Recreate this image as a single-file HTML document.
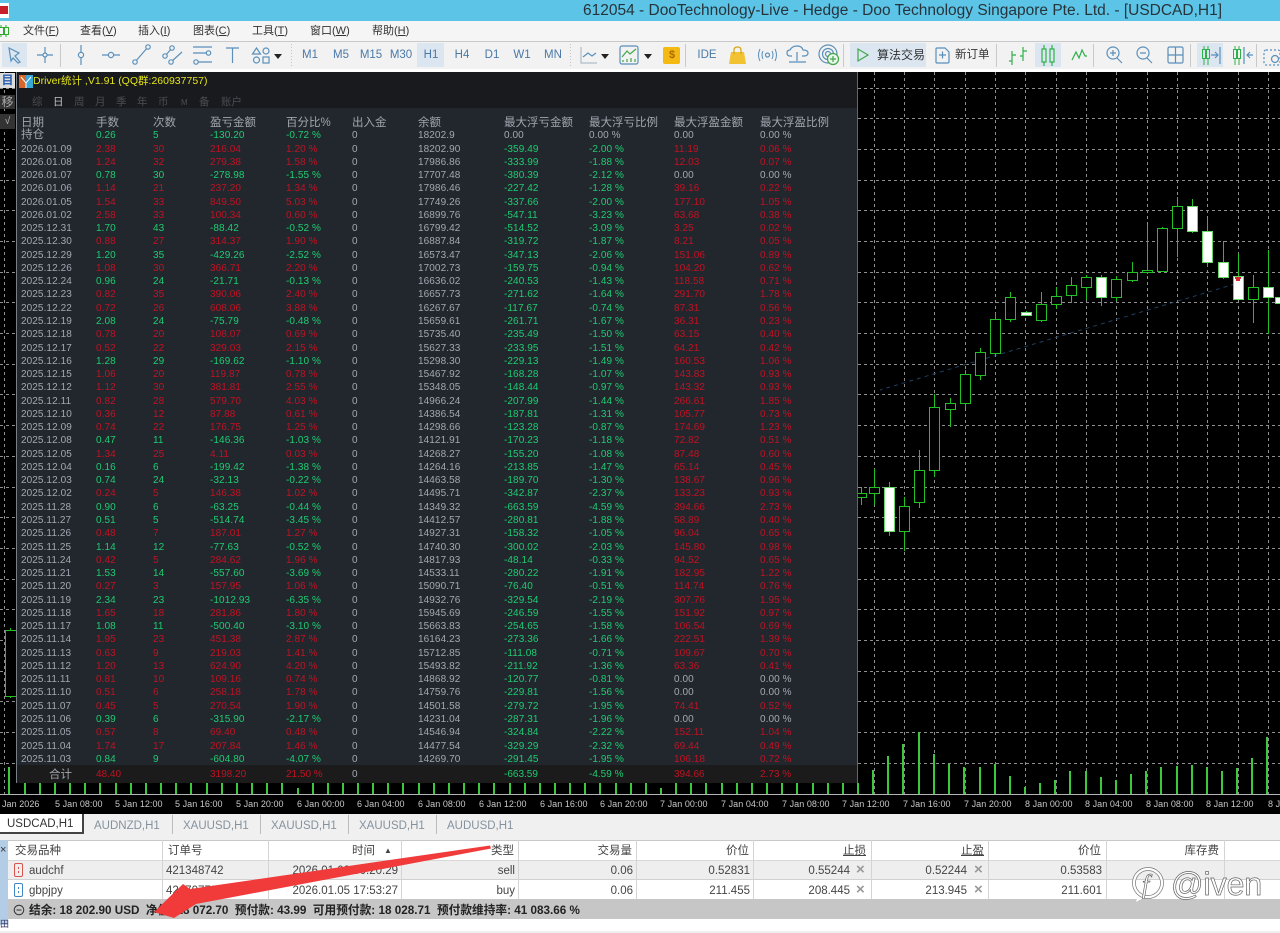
<!DOCTYPE html>
<html><head><meta charset="utf-8"><title>MT5</title>
<style>
html,body{margin:0;padding:0;width:1280px;height:933px;overflow:hidden;background:#fff}
body{position:relative;font-family:"Liberation Sans","Noto Sans CJK SC",sans-serif;color:#222}
.a{position:absolute;white-space:nowrap}
u{text-underline-offset:1px}
#title{left:0;top:0;width:1280px;height:21px;background:#5cc5e7}
#menu{left:0;top:21px;width:1280px;height:20px;background:#f5f5f5;font-size:11px;line-height:20px;color:#333}
#tool{left:0;top:41px;width:1280px;height:28px;background:#f2f2f2;border-top:1px solid #c9c9c9;box-sizing:border-box}
.tf{font-size:11.5px;line-height:14px;color:#4a79a8;top:48px;transform:translateX(-50%)}
#chart{left:0;top:72px;width:1280px;height:742px;background:#000}
.tl{font-size:9px;color:#c8c8c8;top:799px;line-height:11px;letter-spacing:.05px}
#panel{left:16px;top:72px;width:842px;height:711px;background:#22272e;border-left:1px solid #7a8088;border-right:1px solid #666;box-sizing:border-box;overflow:hidden;filter:blur(.2px)}
#ptop{position:absolute;left:0;top:0;width:100%;height:36px;background:#191a1d}
#ptotal{position:absolute;left:0;top:693px;width:100%;height:18px;background:#1b1b1c}
.tb{font-size:10.5px;top:24px;line-height:13px;color:#4a4d52}
.h{font-size:11.5px;color:#a0a6ae;top:43.500px;line-height:15px}
#rows{position:absolute;left:-17px;top:57.300px;width:860px;font-size:10px;letter-spacing:.08px}
#rows p{margin:0;height:13.28px;line-height:13.28px;position:relative;color:#a2a8b1}
#rows i{font-style:normal;position:absolute;top:0;white-space:nowrap}
#rows i:nth-child(1){left:21px}
#rows i:nth-child(2){left:96px;color:#c01222}
#rows i:nth-child(3){left:153px;color:#c01222}
#rows i:nth-child(4){left:210px;color:#c01222}
#rows i:nth-child(5){left:286px;color:#c01222}
#rows i:nth-child(6){left:352px}
#rows i:nth-child(7){left:418px}
#rows i:nth-child(8){left:504px;color:#1ecb70}
#rows i:nth-child(9){left:589px;color:#1ecb70}
#rows i:nth-child(10){left:674px;color:#c01222}
#rows i:nth-child(11){left:760px;color:#c01222}
#rows p.u i:nth-child(2),#rows p.u i:nth-child(3),#rows p.u i:nth-child(4),#rows p.u i:nth-child(5){color:#1ecb70}
#rows p.z i:nth-child(10),#rows p.z i:nth-child(11){color:#a2a8b1}
#rows p.n i:nth-child(8),#rows p.n i:nth-child(9){color:#a2a8b1}
.tt{top:767px;font-size:10px;line-height:16px;color:#c01222;filter:blur(.2px)}
#tabs{left:0;top:814px;width:1280px;height:26px;background:#f0f0f0;font-size:11.5px;color:#85929e}
.tab{top:5px;line-height:14px;font-size:11.5px}
.sep{width:1px;height:19px;background:#bbb;top:1px}
#tab0{left:0;top:0;width:84px;height:20px;background:#fff;border-right:2px solid #444;border-bottom:2px solid #444;box-sizing:border-box;color:#333;line-height:20px;text-indent:7px;font-size:11.5px}
#tbl{left:0;top:840px;width:1280px;height:93px;background:#fff}
.rw{left:8px;width:1272px;height:19.5px;box-sizing:border-box}
.c{font-size:11.5px;line-height:15px;color:#444}
.r{transform:translateX(-100%)}
.v{width:1px;background:#d4d4d4;top:0;height:59px}
</style></head><body>
<div class="a" id="title"></div>
<div class="a" style="left:0;top:3px;width:9px;height:15px;background:#fff"></div>
<div class="a" style="left:0;top:6px;width:8px;height:8px;background:#c8202a"></div>
<div class="a" style="left:583px;top:1px;font-size:15.5px;line-height:19px;color:#27333a">612054 - DooTechnology-Live - Hedge - Doo Technology Singapore Pte. Ltd. - [USDCAD,H1]</div>

<div class="a" id="menu">
<span class="a" style="left:23px">文件(<u>F</u>)</span>
<span class="a" style="left:80px">查看(<u>V</u>)</span>
<span class="a" style="left:138px">插入(<u>I</u>)</span>
<span class="a" style="left:193px">图表(<u>C</u>)</span>
<span class="a" style="left:252px">工具(<u>T</u>)</span>
<span class="a" style="left:310px">窗口(<u>W</u>)</span>
<span class="a" style="left:372px">帮助(<u>H</u>)</span>
<svg class="a" style="left:0;top:3px" width="12" height="14"><path d="M1 1V13M6 1V13" stroke="#2eaa2e" fill="none"/><rect x="-1.5" y="3.5" width="5" height="7" fill="#f5f5f5" stroke="#2eaa2e"/><rect x="4.5" y="3.5" width="4" height="7" fill="#f5f5f5" stroke="#2eaa2e"/></svg>
</div>

<div class="a" id="tool"></div>
<svg class="a" style="left:0;top:41px" width="1280" height="28" fill="none" stroke="#5a90bb" stroke-width="1.2">
<g stroke="none"><rect x="2" y="2" width="25" height="24" fill="#dbe6f1"/><rect x="417" y="2" width="27" height="24" fill="#dbe6f1"/><rect x="850" y="2" width="76" height="24" fill="#dbe6f1"/><rect x="1035" y="2" width="26" height="24" fill="#dbe6f1"/><rect x="1197" y="2" width="26" height="24" fill="#dbe6f1"/></g>
<g stroke="#c9c9c9" stroke-width="1"><path d="M60.5 3V26M685.5 3V26M843.5 3V26M996.5 3V26M1093.5 3V26M1190.5 3V26M1256.5 3V26"/></g>
<g stroke="#c4c4c4" stroke-width="1" stroke-dasharray="1 2"><path d="M291.5 3V26M570.5 3V26"/></g>
<path d="M9 7L19 12L15 15L20 21L18 22L13 17L11 20Z"/>
<path d="M37 14H53M45 6V22"/><circle cx="45" cy="14" r="2" fill="#f2f2f2"/>
<path d="M81 4V24"/><circle cx="81" cy="14" r="2.6" fill="#f2f2f2"/>
<path d="M102 14H120"/><circle cx="111" cy="14" r="2.6" fill="#f2f2f2"/>
<path d="M135 21L148 6"/><circle cx="135" cy="21" r="2.2" fill="#f2f2f2"/><circle cx="148" cy="6" r="2.2" fill="#f2f2f2"/>
<path d="M165 15L172 7M171 21L182 11"/><circle cx="165" cy="15" r="2.2" fill="#f2f2f2"/><circle cx="172" cy="7" r="2.2" fill="#f2f2f2"/><circle cx="171" cy="21" r="2.2" fill="#f2f2f2"/>
<path d="M193 6H212M193 12H206M198 21H212"/><circle cx="208.500" cy="12" r="2.200" fill="#f2f2f2"/><circle cx="196" cy="21" r="2.200" fill="#f2f2f2"/>
<path d="M226 7H239M232.5 7V22"/>
<path d="M252.500 13L256.500 7L260.500 13Z"/><circle cx="266" cy="10" r="3"/><circle cx="256.500" cy="19" r="3"/><rect x="263" y="16" width="6" height="6"/>
<path d="M274 13H282L278 18Z" fill="#222" stroke="none"/>
<path d="M581 6V22H597" stroke="#b0bcc8"/><path d="M583 16L588 12L592 15L596 12"/>
<path d="M601 13H609L605 18Z" fill="#222" stroke="none"/>
<rect x="620" y="5" width="18" height="18" rx="2"/><path d="M622 16L627 10L630 13L636 8" stroke="#3fa64a"/><path d="M623 21V19M627 21V18M631 21V17M635 21V18" stroke="#3fa64a"/>
<path d="M644 13H652L648 18Z" fill="#222" stroke="none"/>
<rect x="663" y="6" width="17" height="17" rx="2" fill="#f5b914" stroke="none"/>
<path d="M731 11H744L746 23H729Z" fill="#f1c232" stroke="none"/><path d="M734 13V9Q734 6 737.500 6T741 9V13" stroke="#d6a40f"/>
<circle cx="767.500" cy="14" r="2"/><path d="M763 10Q761 14 763 18M772 10Q774 14 772 18M760 8Q757 14 760 20M775 8Q778 14 775 20" stroke-width="1"/>
<path d="M792 15H790Q787 15 787 12T790 9Q792 5 797 5T803 9Q808 9 808 12T804 15H802" /><path d="M797 11V20M789 21H806"/>
<circle cx="828" cy="13" r="9"/><circle cx="828" cy="13" r="5.500"/><circle cx="828" cy="13" r="2.500"/><circle cx="833" cy="18" r="5.500" fill="#eaf6ea" stroke="#3fa64a"/><path d="M833 15V21M830 18H836" stroke="#3fa64a"/>
<path d="M858 8V20L868 14Z" stroke="#3fa64a"/>
<path d="M937 7H945L949 11V21Q949 22 947 22H937Q936 22 936 21V8Q936 7 937 7Z"/><path d="M939 14H946M942.500 10.500V17.500" stroke="#5a90bb"/>
<g stroke="#2eb04a"><path d="M1012 10V24M1012 14H1016M1012 20H1009M1023 6V20M1023 10H1027M1023 15H1020"/>
<path d="M1044 4V25M1052 4V25"/><rect x="1042" y="8" width="4" height="13" fill="#dbe6f1"/><rect x="1050" y="8" width="4" height="13" fill="#dbe6f1"/>
<path d="M1072 19L1076 11L1079 17L1082 9L1085 15H1087"/></g>
<circle cx="1113" cy="12" r="6"/><path d="M1117 17L1122 22M1110 12H1116M1113 9V15"/>
<circle cx="1143" cy="12" r="6"/><path d="M1147 17L1152 22M1140 12H1146"/>
<rect x="1168" y="6" width="15" height="16" rx="1.500"/><path d="M1175.500 6V22M1168 14H1183"/>
<g stroke="#2eb04a" stroke-width="1"><path d="M1204 5V24M1208 5V24"/><rect x="1202.500" y="8.500" width="3" height="9" fill="#dbe6f1"/><rect x="1206.500" y="8.500" width="3" height="9" fill="#dbe6f1"/></g><path d="M1211 14H1217M1215 11L1218 14L1215 17M1220 6V23" />
<g stroke="#2eb04a" stroke-width="1"><path d="M1235 5V24M1239 5V24"/><rect x="1233.500" y="8.500" width="3" height="9" fill="#f2f2f2"/><rect x="1237.500" y="8.500" width="3" height="9" fill="#f2f2f2"/></g><path d="M1244 6V23M1247 14H1253M1250 11L1247 14L1250 17" />
<rect x="1264" y="9" width="16" height="15" rx="2" stroke-dasharray="2 2"/><circle cx="1275" cy="18" r="3.500"/>
</svg>
<span class="a" style="left:669px;top:48px;font-size:11px;line-height:14px;color:#a86d00;font-weight:bold">$</span>
<span class="a tf" style="left:310px">M1</span><span class="a tf" style="left:341px">M5</span><span class="a tf" style="left:371px">M15</span><span class="a tf" style="left:401px">M30</span><span class="a tf" style="left:431px">H1</span><span class="a tf" style="left:462px">H4</span><span class="a tf" style="left:492px">D1</span><span class="a tf" style="left:522px">W1</span><span class="a tf" style="left:553px">MN</span><span class="a tf" style="left:707px">IDE</span>
<span class="a" style="left:877px;top:48px;font-size:12px;line-height:15px;color:#333">算法交易</span>
<span class="a" style="left:955px;top:48px;font-size:11.5px;line-height:15px;color:#333">新订单</span>
<div class="a" style="left:0;top:69px;width:1280px;height:3px;background:#fff"></div>

<div class="a" id="chart"></div>
<svg class="a" style="left:0;top:0" width="1280" height="814" shape-rendering="crispEdges">
<g fill="none" stroke="#8e8e8e" stroke-dasharray="3 3">
<path d="M0 88.500H1280M0 118.500H1280M0 149.500H1280M0 180.500H1280M0 210.500H1280M0 241.500H1280M0 272.500H1280M0 302.500H1280M0 333.500H1280M0 364.500H1280M0 394.500H1280M0 425.500H1280M0 456.500H1280M0 487.500H1280M0 517.500H1280M0 548.500H1280M0 579.500H1280M0 609.500H1280M0 640.500H1280M0 671.500H1280M0 701.500H1280M0 732.500H1280M0 763.500H1280"/>
<path d="M4.500 72V794M874.500 72V794M904.500 72V794M934.500 72V794M965.500 72V794M995.500 72V794M1025.500 72V794M1056.500 72V794M1086.500 72V794M1116.500 72V794M1147.500 72V794M1177.500 72V794M1207.500 72V794M1238.500 72V794M1268.500 72V794"/>
</g>
<path d="M1235 284L880 390" stroke="#1d3f60" fill="none" stroke-dasharray="4 4" shape-rendering="auto"/>
<g stroke="#22c022" fill="none">
<path d="M861.500 487V505M874.500 469V505M889.500 482V536M904.500 497V551M919.500 450V508M934.500 394V477M950.500 398V427M965.500 370V408M980.500 348V380M995.500 313V356M1010.500 292V322M1026.500 311V316M1041.500 292V322M1056.500 287V309M1071.500 277V303M1086.500 275V300M1101.500 275V306M1116.500 276V301M1132.500 262V282M1147.500 225V274M1162.500 227V272M1177.500 197V257M1192.500 199V233M1207.500 219V267M1223.500 241V279M1238.500 254V300M1253.500 275V323M1268.500 250V334M10.500 628V698"/>
<g fill="#000">
<rect x="856.500" y="493.500" width="10" height="4"/><rect x="869.500" y="487.500" width="10" height="6"/><rect x="899.500" y="506.500" width="10" height="25"/><rect x="914.500" y="470.500" width="10" height="32"/><rect x="929.500" y="407.500" width="10" height="63"/><rect x="945.500" y="403.500" width="10" height="6"/><rect x="960.500" y="374.500" width="10" height="29"/><rect x="975.500" y="352.500" width="10" height="23"/><rect x="990.500" y="319.500" width="10" height="34"/><rect x="1005.500" y="297.500" width="10" height="22"/><rect x="1036.500" y="304.500" width="10" height="16"/><rect x="1051.500" y="296.500" width="10" height="8"/><rect x="1066.500" y="285.500" width="10" height="10"/><rect x="1081.500" y="277.500" width="10" height="10"/><rect x="1111.500" y="279.500" width="10" height="18"/><rect x="1127.500" y="272.500" width="10" height="8"/><rect x="1142.500" y="270.500" width="10" height="2"/><rect x="1157.500" y="228.500" width="10" height="43"/><rect x="1172.500" y="206.500" width="10" height="22"/><rect x="1248.500" y="287.500" width="10" height="12"/><rect x="5.500" y="630.500" width="11" height="66"/>
</g>
<g fill="#fff" stroke="#66d866">
<rect x="884.500" y="487.500" width="10" height="44"/><rect x="1021.500" y="312.500" width="10" height="3"/><rect x="1096.500" y="277.500" width="10" height="20"/><rect x="1187.500" y="206.500" width="10" height="25"/><rect x="1202.500" y="231.500" width="10" height="31"/><rect x="1218.500" y="262.500" width="10" height="15"/><rect x="1233.500" y="276.500" width="10" height="23"/><rect x="1263.500" y="287.500" width="10" height="10"/><rect x="1275.500" y="297.500" width="10" height="6"/>
</g>
</g>
<path d="M1235 277H1241V279H1240V281H1236V279H1235Z" fill="#d9242c"/>
<g stroke="#3dc83d" stroke-width="2" fill="none">
<path d="M873 770V794M888 756V794M903 744V794M919 732V794M934 754V794M949 764V794M964 767V794M980 767V794M995 764V794M1010 776V794M1025 787V794M1040 783V794M1055 780V794M1070 771V794M1086 771V794M1101 777V794M1116 780V794M1131 774V794M1146 771V794M1161 767V794M1177 766V794M1192 765V794M1207 767V794M1222 771V794M1237 768V794M1252 758V794M1267 737V794M9 767V794"/>
<path d="M858 783V794M843 783V794M828 783V794M813 783V794M797 783V794M782 783V794M767 783V794M752 783V794M737 783V794M722 783V794M706 783V794M691 783V794M676 783V794M661 788V794M646 783V794M631 783V794M616 783V794M600 783V794M585 783V794M570 783V794M555 783V794M540 783V794M525 783V794M510 783V794M494 783V794M479 783V794M464 783V794M449 783V794M434 783V794M419 783V794M403 783V794M388 783V794M373 783V794M358 783V794M343 783V794M328 783V794M313 783V794M298 788V794M282 783V794M267 783V794M252 783V794M237 783V794M222 783V794M207 783V794M191 783V794M176 783V794M161 783V794M146 783V794M131 783V794M116 783V794M100 783V794M85 783V794M70 783V794M55 783V794M40 783V794M25 783V794"/>
</g>
<rect x="0" y="794" width="1280" height="1" fill="#b4b4b4"/>
</svg>
<span class="a tl" style="left:2px">Jan 2026</span><span class="a tl" style="left:55px">5 Jan 08:00</span><span class="a tl" style="left:115px">5 Jan 12:00</span><span class="a tl" style="left:175px">5 Jan 16:00</span><span class="a tl" style="left:236px">5 Jan 20:00</span><span class="a tl" style="left:297px">6 Jan 00:00</span><span class="a tl" style="left:357px">6 Jan 04:00</span><span class="a tl" style="left:418px">6 Jan 08:00</span><span class="a tl" style="left:479px">6 Jan 12:00</span><span class="a tl" style="left:540px">6 Jan 16:00</span><span class="a tl" style="left:600px">6 Jan 20:00</span><span class="a tl" style="left:660px">7 Jan 00:00</span><span class="a tl" style="left:721px">7 Jan 04:00</span><span class="a tl" style="left:782px">7 Jan 08:00</span><span class="a tl" style="left:842px">7 Jan 12:00</span><span class="a tl" style="left:903px">7 Jan 16:00</span><span class="a tl" style="left:964px">7 Jan 20:00</span><span class="a tl" style="left:1025px">8 Jan 00:00</span><span class="a tl" style="left:1085px">8 Jan 04:00</span><span class="a tl" style="left:1146px">8 Jan 08:00</span><span class="a tl" style="left:1206px">8 Jan 12:00</span><span class="a tl" style="left:1268px">8 J</span>

<div class="a" style="left:0;top:73px;width:15px;height:15px;background:#ddd;font-size:12px;line-height:15px;text-align:center;color:#2a5fb0;font-weight:bold;overflow:hidden">目</div>
<div class="a" style="left:0;top:95px;width:15px;height:14px;background:#333;font-size:12px;line-height:14px;text-align:center;color:#aaa;overflow:hidden">移</div>
<div class="a" style="left:0;top:114px;width:15px;height:15px;background:#333;font-size:10px;line-height:15px;text-align:center;color:#bbb;overflow:hidden">√</div>

<div class="a" id="panel">
<div id="ptop"></div><div id="ptotal"></div>
<svg class="a" style="left:2px;top:3px" width="14" height="13"><rect width="7" height="13" fill="#d9662c"/><rect x="7" width="7" height="13" fill="#3aa7d9"/><path d="M2 2L7 8L12 2M7 8V13" stroke="#fff" fill="none"/></svg>
<span class="a" style="left:16px;top:2px;font-size:10.5px;line-height:14px;color:#e4e41a">Driver统计 ,V1.91 (QQ群:260937757)</span>
<span class="a tb" style="left:15px">综</span><span class="a tb" style="left:36px;color:#c0c4c8">日</span><span class="a tb" style="left:57px">周</span><span class="a tb" style="left:78px">月</span><span class="a tb" style="left:99px">季</span><span class="a tb" style="left:120px">年</span><span class="a tb" style="left:141px">币</span><span class="a tb" style="left:164px;font-size:8px">M</span><span class="a tb" style="left:182px">备</span><span class="a tb" style="left:204px">账户</span>
<span class="a h" style="left:4px">日期</span><span class="a h" style="left:79px">手数</span><span class="a h" style="left:136px">次数</span><span class="a h" style="left:193px">盈亏金额</span><span class="a h" style="left:269px">百分比%</span><span class="a h" style="left:335px">出入金</span><span class="a h" style="left:401px">余额</span><span class="a h" style="left:487px">最大浮亏金额</span><span class="a h" style="left:572px">最大浮亏比例</span><span class="a h" style="left:657px">最大浮盈金额</span><span class="a h" style="left:743px">最大浮盈比例</span>
<div id="rows">
<p class="u n z"><i style="font-size:11.5px">持仓</i><i>0.26</i><i>5</i><i>-130.20</i><i>-0.72 %</i><i>0</i><i>18202.9</i><i>0.00</i><i>0.00 %</i><i>0.00</i><i>0.00 %</i></p>
<p><i>2026.01.09</i><i>2.38</i><i>30</i><i>216.04</i><i>1.20 %</i><i>0</i><i>18202.90</i><i>-359.49</i><i>-2.00 %</i><i>11.19</i><i>0.06 %</i></p>
<p><i>2026.01.08</i><i>1.24</i><i>32</i><i>279.38</i><i>1.58 %</i><i>0</i><i>17986.86</i><i>-333.99</i><i>-1.88 %</i><i>12.03</i><i>0.07 %</i></p>
<p class="u z"><i>2026.01.07</i><i>0.78</i><i>30</i><i>-278.98</i><i>-1.55 %</i><i>0</i><i>17707.48</i><i>-380.39</i><i>-2.12 %</i><i>0.00</i><i>0.00 %</i></p>
<p><i>2026.01.06</i><i>1.14</i><i>21</i><i>237.20</i><i>1.34 %</i><i>0</i><i>17986.46</i><i>-227.42</i><i>-1.28 %</i><i>39.16</i><i>0.22 %</i></p>
<p><i>2026.01.05</i><i>1.54</i><i>33</i><i>849.50</i><i>5.03 %</i><i>0</i><i>17749.26</i><i>-337.66</i><i>-2.00 %</i><i>177.10</i><i>1.05 %</i></p>
<p><i>2026.01.02</i><i>2.58</i><i>33</i><i>100.34</i><i>0.60 %</i><i>0</i><i>16899.76</i><i>-547.11</i><i>-3.23 %</i><i>63.68</i><i>0.38 %</i></p>
<p class="u"><i>2025.12.31</i><i>1.70</i><i>43</i><i>-88.42</i><i>-0.52 %</i><i>0</i><i>16799.42</i><i>-514.52</i><i>-3.09 %</i><i>3.25</i><i>0.02 %</i></p>
<p><i>2025.12.30</i><i>0.88</i><i>27</i><i>314.37</i><i>1.90 %</i><i>0</i><i>16887.84</i><i>-319.72</i><i>-1.87 %</i><i>8.21</i><i>0.05 %</i></p>
<p class="u"><i>2025.12.29</i><i>1.20</i><i>35</i><i>-429.26</i><i>-2.52 %</i><i>0</i><i>16573.47</i><i>-347.13</i><i>-2.06 %</i><i>151.06</i><i>0.89 %</i></p>
<p><i>2025.12.26</i><i>1.08</i><i>30</i><i>366.71</i><i>2.20 %</i><i>0</i><i>17002.73</i><i>-159.75</i><i>-0.94 %</i><i>104.20</i><i>0.62 %</i></p>
<p class="u"><i>2025.12.24</i><i>0.96</i><i>24</i><i>-21.71</i><i>-0.13 %</i><i>0</i><i>16636.02</i><i>-240.53</i><i>-1.43 %</i><i>118.58</i><i>0.71 %</i></p>
<p><i>2025.12.23</i><i>0.82</i><i>35</i><i>390.06</i><i>2.40 %</i><i>0</i><i>16657.73</i><i>-271.62</i><i>-1.64 %</i><i>291.70</i><i>1.78 %</i></p>
<p><i>2025.12.22</i><i>0.72</i><i>26</i><i>608.06</i><i>3.88 %</i><i>0</i><i>16267.67</i><i>-117.67</i><i>-0.74 %</i><i>87.31</i><i>0.56 %</i></p>
<p class="u"><i>2025.12.19</i><i>2.08</i><i>24</i><i>-75.79</i><i>-0.48 %</i><i>0</i><i>15659.61</i><i>-261.71</i><i>-1.67 %</i><i>36.31</i><i>0.23 %</i></p>
<p><i>2025.12.18</i><i>0.78</i><i>20</i><i>108.07</i><i>0.69 %</i><i>0</i><i>15735.40</i><i>-235.49</i><i>-1.50 %</i><i>63.15</i><i>0.40 %</i></p>
<p><i>2025.12.17</i><i>0.52</i><i>22</i><i>329.03</i><i>2.15 %</i><i>0</i><i>15627.33</i><i>-233.95</i><i>-1.51 %</i><i>64.21</i><i>0.42 %</i></p>
<p class="u"><i>2025.12.16</i><i>1.28</i><i>29</i><i>-169.62</i><i>-1.10 %</i><i>0</i><i>15298.30</i><i>-229.13</i><i>-1.49 %</i><i>160.53</i><i>1.06 %</i></p>
<p><i>2025.12.15</i><i>1.06</i><i>20</i><i>119.87</i><i>0.78 %</i><i>0</i><i>15467.92</i><i>-168.28</i><i>-1.07 %</i><i>143.83</i><i>0.93 %</i></p>
<p><i>2025.12.12</i><i>1.12</i><i>30</i><i>381.81</i><i>2.55 %</i><i>0</i><i>15348.05</i><i>-148.44</i><i>-0.97 %</i><i>143.32</i><i>0.93 %</i></p>
<p><i>2025.12.11</i><i>0.82</i><i>28</i><i>579.70</i><i>4.03 %</i><i>0</i><i>14966.24</i><i>-207.99</i><i>-1.44 %</i><i>266.61</i><i>1.85 %</i></p>
<p><i>2025.12.10</i><i>0.36</i><i>12</i><i>87.88</i><i>0.61 %</i><i>0</i><i>14386.54</i><i>-187.81</i><i>-1.31 %</i><i>105.77</i><i>0.73 %</i></p>
<p><i>2025.12.09</i><i>0.74</i><i>22</i><i>176.75</i><i>1.25 %</i><i>0</i><i>14298.66</i><i>-123.28</i><i>-0.87 %</i><i>174.69</i><i>1.23 %</i></p>
<p class="u"><i>2025.12.08</i><i>0.47</i><i>11</i><i>-146.36</i><i>-1.03 %</i><i>0</i><i>14121.91</i><i>-170.23</i><i>-1.18 %</i><i>72.82</i><i>0.51 %</i></p>
<p><i>2025.12.05</i><i>1.34</i><i>25</i><i>4.11</i><i>0.03 %</i><i>0</i><i>14268.27</i><i>-155.20</i><i>-1.08 %</i><i>87.48</i><i>0.60 %</i></p>
<p class="u"><i>2025.12.04</i><i>0.16</i><i>6</i><i>-199.42</i><i>-1.38 %</i><i>0</i><i>14264.16</i><i>-213.85</i><i>-1.47 %</i><i>65.14</i><i>0.45 %</i></p>
<p class="u"><i>2025.12.03</i><i>0.74</i><i>24</i><i>-32.13</i><i>-0.22 %</i><i>0</i><i>14463.58</i><i>-189.70</i><i>-1.30 %</i><i>138.67</i><i>0.96 %</i></p>
<p><i>2025.12.02</i><i>0.24</i><i>5</i><i>146.38</i><i>1.02 %</i><i>0</i><i>14495.71</i><i>-342.87</i><i>-2.37 %</i><i>133.23</i><i>0.93 %</i></p>
<p class="u"><i>2025.11.28</i><i>0.90</i><i>6</i><i>-63.25</i><i>-0.44 %</i><i>0</i><i>14349.32</i><i>-663.59</i><i>-4.59 %</i><i>394.66</i><i>2.73 %</i></p>
<p class="u"><i>2025.11.27</i><i>0.51</i><i>5</i><i>-514.74</i><i>-3.45 %</i><i>0</i><i>14412.57</i><i>-280.81</i><i>-1.88 %</i><i>58.89</i><i>0.40 %</i></p>
<p><i>2025.11.26</i><i>0.48</i><i>7</i><i>187.01</i><i>1.27 %</i><i>0</i><i>14927.31</i><i>-158.32</i><i>-1.05 %</i><i>96.04</i><i>0.65 %</i></p>
<p class="u"><i>2025.11.25</i><i>1.14</i><i>12</i><i>-77.63</i><i>-0.52 %</i><i>0</i><i>14740.30</i><i>-300.02</i><i>-2.03 %</i><i>145.80</i><i>0.98 %</i></p>
<p><i>2025.11.24</i><i>0.42</i><i>5</i><i>284.62</i><i>1.96 %</i><i>0</i><i>14817.93</i><i>-48.14</i><i>-0.33 %</i><i>94.52</i><i>0.65 %</i></p>
<p class="u"><i>2025.11.21</i><i>1.53</i><i>14</i><i>-557.60</i><i>-3.69 %</i><i>0</i><i>14533.11</i><i>-280.22</i><i>-1.91 %</i><i>182.95</i><i>1.22 %</i></p>
<p><i>2025.11.20</i><i>0.27</i><i>3</i><i>157.95</i><i>1.06 %</i><i>0</i><i>15090.71</i><i>-76.40</i><i>-0.51 %</i><i>114.74</i><i>0.76 %</i></p>
<p class="u"><i>2025.11.19</i><i>2.34</i><i>23</i><i>-1012.93</i><i>-6.35 %</i><i>0</i><i>14932.76</i><i>-329.54</i><i>-2.19 %</i><i>307.76</i><i>1.95 %</i></p>
<p><i>2025.11.18</i><i>1.65</i><i>18</i><i>281.86</i><i>1.80 %</i><i>0</i><i>15945.69</i><i>-246.59</i><i>-1.55 %</i><i>151.92</i><i>0.97 %</i></p>
<p class="u"><i>2025.11.17</i><i>1.08</i><i>11</i><i>-500.40</i><i>-3.10 %</i><i>0</i><i>15663.83</i><i>-254.65</i><i>-1.58 %</i><i>106.54</i><i>0.69 %</i></p>
<p><i>2025.11.14</i><i>1.95</i><i>23</i><i>451.38</i><i>2.87 %</i><i>0</i><i>16164.23</i><i>-273.36</i><i>-1.66 %</i><i>222.51</i><i>1.39 %</i></p>
<p><i>2025.11.13</i><i>0.63</i><i>9</i><i>219.03</i><i>1.41 %</i><i>0</i><i>15712.85</i><i>-111.08</i><i>-0.71 %</i><i>109.67</i><i>0.70 %</i></p>
<p><i>2025.11.12</i><i>1.20</i><i>13</i><i>624.90</i><i>4.20 %</i><i>0</i><i>15493.82</i><i>-211.92</i><i>-1.36 %</i><i>63.36</i><i>0.41 %</i></p>
<p class="z"><i>2025.11.11</i><i>0.81</i><i>10</i><i>109.16</i><i>0.74 %</i><i>0</i><i>14868.92</i><i>-120.77</i><i>-0.81 %</i><i>0.00</i><i>0.00 %</i></p>
<p class="z"><i>2025.11.10</i><i>0.51</i><i>6</i><i>258.18</i><i>1.78 %</i><i>0</i><i>14759.76</i><i>-229.81</i><i>-1.56 %</i><i>0.00</i><i>0.00 %</i></p>
<p><i>2025.11.07</i><i>0.45</i><i>5</i><i>270.54</i><i>1.90 %</i><i>0</i><i>14501.58</i><i>-279.72</i><i>-1.95 %</i><i>74.41</i><i>0.52 %</i></p>
<p class="u z"><i>2025.11.06</i><i>0.39</i><i>6</i><i>-315.90</i><i>-2.17 %</i><i>0</i><i>14231.04</i><i>-287.31</i><i>-1.96 %</i><i>0.00</i><i>0.00 %</i></p>
<p><i>2025.11.05</i><i>0.57</i><i>8</i><i>69.40</i><i>0.48 %</i><i>0</i><i>14546.94</i><i>-324.84</i><i>-2.22 %</i><i>152.11</i><i>1.04 %</i></p>
<p><i>2025.11.04</i><i>1.74</i><i>17</i><i>207.84</i><i>1.46 %</i><i>0</i><i>14477.54</i><i>-329.29</i><i>-2.32 %</i><i>69.44</i><i>0.49 %</i></p>
<p class="u"><i>2025.11.03</i><i>0.84</i><i>9</i><i>-604.80</i><i>-4.07 %</i><i>0</i><i>14269.70</i><i>-291.45</i><i>-1.95 %</i><i>106.18</i><i>0.72 %</i></p>
</div>
</div>
<span class="a tt" style="left:49px;font-size:11.5px;color:#a0a6ae">合计</span><span class="a tt" style="left:96px">48.40</span><span class="a tt" style="left:210px">3198.20</span><span class="a tt" style="left:286px">21.50 %</span><span class="a tt" style="left:352px;color:#a2a8b1">0</span><span class="a tt" style="left:504px;color:#1ecb70">-663.59</span><span class="a tt" style="left:589px;color:#1ecb70">-4.59 %</span><span class="a tt" style="left:674px">394.66</span><span class="a tt" style="left:760px">2.73 %</span>

<div class="a" id="tabs">
<div class="a" id="tab0">USDCAD,H1</div>
<span class="a tab" style="left:94px">AUDNZD,H1</span><i class="a sep" style="left:172px"></i>
<span class="a tab" style="left:183px">XAUUSD,H1</span><i class="a sep" style="left:260px"></i>
<span class="a tab" style="left:271px">XAUUSD,H1</span><i class="a sep" style="left:348px"></i>
<span class="a tab" style="left:359px">XAUUSD,H1</span><i class="a sep" style="left:436px"></i>
<span class="a tab" style="left:447px">AUDUSD,H1</span>
</div>

<div class="a" id="tbl">
<div class="a" style="left:0;top:0;width:8px;height:85px;background:#b4cde6"></div>
<span class="a" style="left:0;top:3px;font-size:11px;line-height:14px;color:#333">×</span>
<span class="a" style="left:0;top:78px;font-size:9px;line-height:12px;color:#336">田</span>
<div class="a" style="left:8px;top:0;width:1272px;height:1px;background:#c8c8c8"></div>
<div class="a rw" style="top:20px;background:#eeeeee;border-top:1px solid #d8d8d8;border-bottom:1px solid #d0d0d0;height:20px"></div>
<div class="a rw" style="top:40px;background:#fff;height:19px"></div>
<div class="a" style="left:8px;top:59px;width:1272px;height:20px;background:#c6c6c6"></div>
<i class="a v" style="left:162px"></i><i class="a v" style="left:268px"></i><i class="a v" style="left:401px"></i><i class="a v" style="left:518px"></i><i class="a v" style="left:636px"></i><i class="a v" style="left:753px"></i><i class="a v" style="left:871px"></i><i class="a v" style="left:988px"></i><i class="a v" style="left:1106px"></i><i class="a v" style="left:1224px"></i>
<span class="a c" style="left:15px;top:4px">交易品种</span><span class="a c" style="left:168px;top:4px">订单号</span><span class="a c r" style="left:375px;top:4px">时间</span><span class="a c" style="left:384px;top:3px;font-size:8px">▲</span><span class="a c r" style="left:514px;top:4px">类型</span><span class="a c r" style="left:632px;top:4px">交易量</span><span class="a c r" style="left:749px;top:4px">价位</span><span class="a c r" style="left:866px;top:4px"><u>止损</u></span><span class="a c r" style="left:984px;top:4px"><u>止盈</u></span><span class="a c r" style="left:1101px;top:4px">价位</span><span class="a c r" style="left:1219px;top:4px">库存费</span>
<svg class="a" style="left:13px;top:22px" width="12" height="36" fill="none"><rect x="1.500" y="1.500" width="8" height="13" rx="1.500" stroke="#d9534f"/><rect x="1.500" y="21.500" width="8" height="13" rx="1.500" stroke="#3f87c5"/><path d="M5.500 5V7M5.500 9V11" stroke="#d9534f"/><path d="M5.500 25V27M5.500 29V31" stroke="#3f87c5"/></svg>
<span class="a c" style="left:29px;top:23.500px">audchf</span><span class="a c" style="left:166px;top:23.500px">421348742</span><span class="a c r" style="left:398px;top:23.500px">2026.01.02 00:20:29</span><span class="a c r" style="left:515px;top:23.500px">sell</span><span class="a c r" style="left:633px;top:23.500px">0.06</span><span class="a c r" style="left:750px;top:23.500px">0.52831</span><span class="a c r" style="left:850px;top:23.500px">0.55244</span><span class="a c" style="left:856px;top:22px;font-size:15px;color:#999;font-weight:bold">×</span><span class="a c r" style="left:967px;top:23.500px">0.52244</span><span class="a c" style="left:974px;top:22px;font-size:15px;color:#999;font-weight:bold">×</span><span class="a c r" style="left:1102px;top:23.500px">0.53583</span>
<span class="a c" style="left:29px;top:44px">gbpjpy</span><span class="a c" style="left:166px;top:44px">424707793</span><span class="a c r" style="left:398px;top:44px">2026.01.05 17:53:27</span><span class="a c r" style="left:515px;top:44px">buy</span><span class="a c r" style="left:633px;top:44px">0.06</span><span class="a c r" style="left:750px;top:44px">211.455</span><span class="a c r" style="left:850px;top:44px">208.445</span><span class="a c" style="left:856px;top:42px;font-size:15px;color:#999;font-weight:bold">×</span><span class="a c r" style="left:967px;top:44px">213.945</span><span class="a c" style="left:974px;top:42px;font-size:15px;color:#999;font-weight:bold">×</span><span class="a c r" style="left:1102px;top:44px">211.601</span>
<svg class="a" style="left:13px;top:64px" width="12" height="12" fill="none" stroke="#333"><circle cx="6" cy="6" r="4.800"/><path d="M3.500 6H8.500"/></svg>
<span class="a" style="left:29px;top:63px;font-size:11.7px;line-height:15px;font-weight:bold;color:#222;white-space:pre">结余: 18 202.90 USD  净值: 18 072.70  预付款: 43.99  可用预付款: 18 028.71  预付款维持率: 41 083.66 %</span>
<div class="a" style="left:0;top:91px;width:1280px;height:2px;background:#f0f0f0"></div>
</div>

<svg class="a" style="left:0;top:0" width="1280" height="933">
<path d="M490 845.500L491 848.500L196 904L174 918L154 912L183 884L190 889Z" fill="#f13a3a"/>
<g fill="none" stroke="#fff" stroke-width="3"><circle cx="1148" cy="883" r="14"/></g>
<path d="M1138 895L1136 902L1145 897" fill="#fff"/>
<g fill="none" stroke="#777" stroke-width=".7"><circle cx="1148" cy="883" r="15.500"/><circle cx="1148" cy="883" r="12.500"/></g>
<text x="1142" y="893" font-size="26" font-style="italic" font-family="Liberation Serif" fill="#fff" stroke="#555" stroke-width=".6">f</text>
<text x="1171" y="895" font-size="32" font-family="Liberation Sans" fill="#fff" stroke="#666" stroke-width=".7">@iven</text>
</svg>
</body></html>
